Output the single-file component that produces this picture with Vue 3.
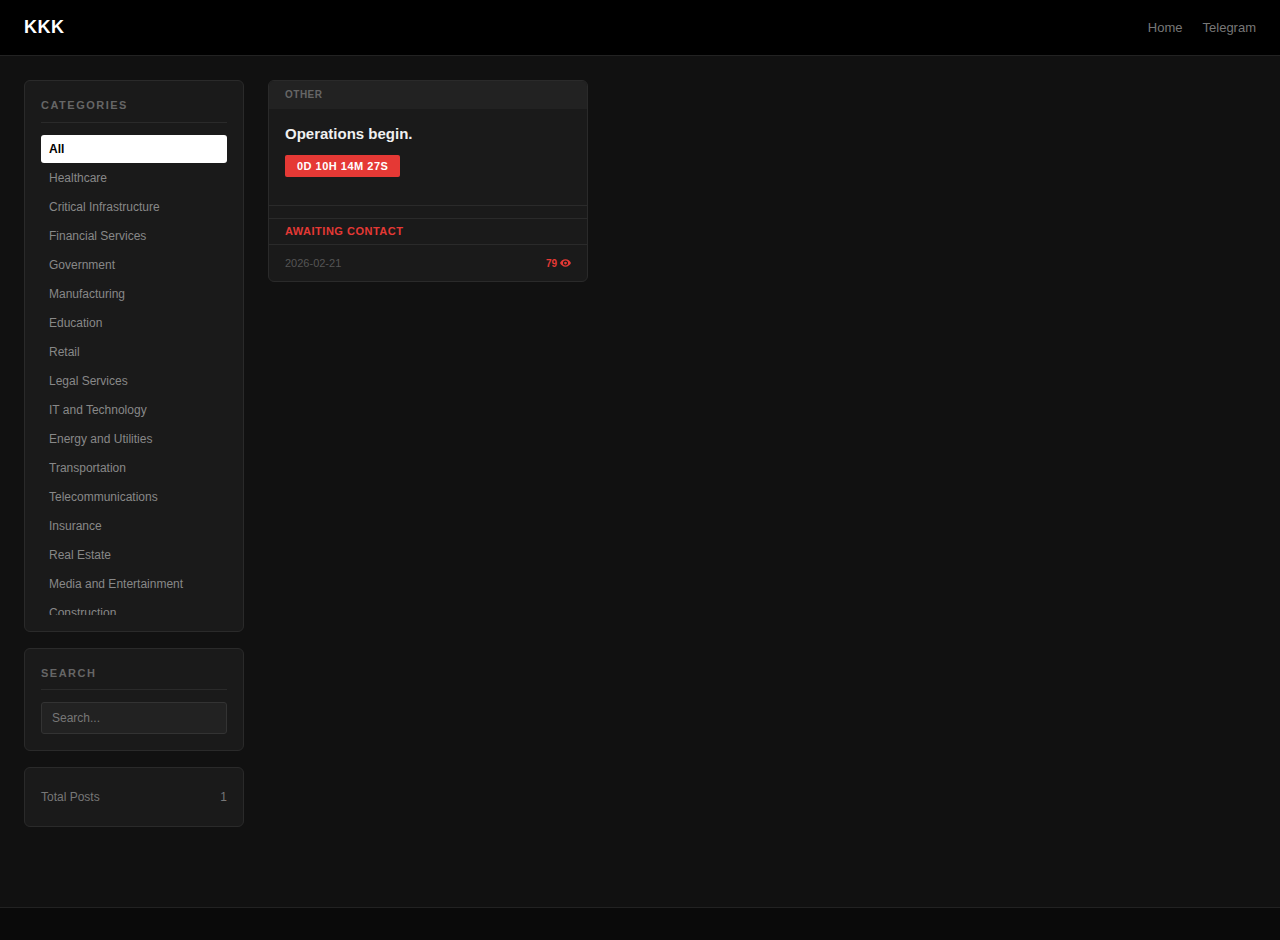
<template>
  <div class="page">
    <header class="site-header">
      <a class="logo">KKK</a>
      <nav class="nav">
        <a>Home</a>
        <a>Telegram</a>
      </nav>
    </header>

    <main class="layout">
      <aside class="sidebar">
        <section class="panel">
          <h3 class="panel-title">Categories</h3>
          <ul class="cat-list">
            <li v-for="(c, i) in categories" :key="c" class="cat" :class="{ active: i === 0 }">{{ c }}</li>
          </ul>
        </section>

        <section class="panel">
          <h3 class="panel-title search-title">Search</h3>
          <input class="search" type="text" placeholder="Search..." />
        </section>

        <section class="panel stats">
          <span>Total Posts</span>
          <span>1</span>
        </section>
      </aside>

      <div class="posts">
        <article class="card">
          <div class="card-cat">OTHER</div>
          <div class="card-body">
            <h2 class="card-title">Operations begin.</h2>
            <span class="timer">0D 10H 14M 27S</span>
          </div>
          <div class="card-spacer"></div>
          <div class="card-status">AWAITING CONTACT</div>
          <div class="card-foot">
            <span class="date">2026-02-21</span>
            <span class="views">
              79
              <svg class="eye" viewBox="0 0 24 16" width="11" height="8">
                <path d="M12 0C6.5 0 2.2 3.4 0 8c2.2 4.6 6.5 8 12 8s9.800-3.400 12-8c-2.200-4.600-6.500-8-12-8zm0 13.500a5.500 5.500 0 1 1 0-11 5.500 5.500 0 0 1 0 11zm0-8.500a3 3 0 1 0 0 6 3 3 0 0 0 0-6z" fill="currentColor" fill-rule="evenodd" />
              </svg>
            </span>
          </div>
        </article>
      </div>
    </main>

    <footer class="site-footer"></footer>
  </div>
</template>

<script setup>
const categories = [
  'All',
  'Healthcare',
  'Critical Infrastructure',
  'Financial Services',
  'Government',
  'Manufacturing',
  'Education',
  'Retail',
  'Legal Services',
  'IT and Technology',
  'Energy and Utilities',
  'Transportation',
  'Telecommunications',
  'Insurance',
  'Real Estate',
  'Media and Entertainment',
  'Construction',
  'Hospitality',
]
</script>

<style>
body {
  background: #111111;
}
</style>

<style scoped>
.page {
  height: 940px;
  display: flex;
  flex-direction: column;
  overflow: hidden;
  background: #111111;
  font-family: "Liberation Sans", Arial, sans-serif;
  color: #888888;
}

.site-header {
  height: 55px;
  flex: none;
  display: flex;
  align-items: center;
  justify-content: space-between;
  padding: 0 24px;
  background: #000000;
  border-bottom: 1px solid #222222;
  box-sizing: content-box;
}

.logo {
  font-size: 18px;
  font-weight: 700;
  letter-spacing: 0.5px;
  color: #ffffff;
}

.nav {
  display: flex;
  gap: 20px;
  font-size: 13px;
  color: #777777;
}

.layout {
  flex: 1;
  display: flex;
  align-items: flex-start;
  gap: 24px;
  padding: 24px;
}

.sidebar {
  width: 220px;
  flex: none;
  display: flex;
  flex-direction: column;
  gap: 16px;
}

.panel {
  background: #1a1a1a;
  border: 1px solid #2a2a2a;
  border-radius: 6px;
  padding: 16px;
}

.panel-title {
  margin: 0 0 12px;
  padding-bottom: 10px;
  height: 26px;
  box-sizing: border-box;
  border-bottom: 1px solid #2a2a2a;
  font-size: 11px;
  line-height: 16px;
  font-weight: 700;
  letter-spacing: 1.5px;
  text-transform: uppercase;
  color: #666666;
}

.search-title {
  height: 25px;
  padding-bottom: 9px;
}

.cat-list {
  list-style: none;
  margin: 0;
  padding: 0;
  height: 480px;
  overflow: hidden;
  display: flex;
  flex-direction: column;
  gap: 1px;
}

.cat {
  flex: none;
  height: 28px;
  line-height: 28px;
  padding: 0 8px;
  border-radius: 3px;
  font-size: 12px;
  color: #888888;
}

.cat.active {
  background: #ffffff;
  color: #000000;
  font-weight: 700;
}

.search {
  display: block;
  width: 100%;
  height: 32px;
  box-sizing: border-box;
  padding: 0 10px;
  background: #222222;
  border: 1px solid #333333;
  border-radius: 3px;
  outline: none;
  font-family: inherit;
  font-size: 12px;
  color: #888888;
}

.search::placeholder {
  color: #777777;
  opacity: 1;
}

.stats {
  display: flex;
  justify-content: space-between;
  align-items: center;
  height: 60px;
  box-sizing: border-box;
  font-size: 12px;
  color: #777777;
}

.posts {
  width: 320px;
  flex: none;
}

.card {
  background: #1a1a1a;
  border: 1px solid #2a2a2a;
  border-radius: 6px;
  overflow: hidden;
}

.card-cat {
  height: 28px;
  line-height: 27px;
  padding: 0 16px;
  background: #222222;
  font-size: 10px;
  font-weight: 700;
  letter-spacing: 0.5px;
  color: #666666;
}

.card-body {
  height: 97px;
  padding: 16px;
  box-sizing: border-box;
  border-bottom: 1px solid #2a2a2a;
}

.card-title {
  margin: 0 0 12px;
  font-size: 15px;
  line-height: 18px;
  font-weight: 700;
  color: #f0f0f0;
}

.timer {
  display: inline-block;
  height: 22px;
  line-height: 22px;
  padding: 0 12px;
  background: #e53935;
  border-radius: 2px;
  font-size: 11px;
  font-weight: 700;
  letter-spacing: 0.5px;
  color: #ffffff;
}

.card-spacer {
  height: 12px;
  border-bottom: 1px solid #2a2a2a;
}

.card-status {
  height: 26px;
  line-height: 24px;
  padding: 0 16px;
  box-sizing: border-box;
  border-bottom: 1px solid #2a2a2a;
  font-size: 11px;
  font-weight: 700;
  letter-spacing: 0.5px;
  color: #e53935;
}

.card-foot {
  height: 36px;
  display: flex;
  align-items: center;
  justify-content: space-between;
  padding: 0 16px;
  font-size: 11px;
}

.date {
  color: #555555;
}

.views {
  display: flex;
  align-items: center;
  gap: 3px;
  font-size: 10px;
  font-weight: 700;
  color: #e53935;
}

.eye {
  display: block;
}

.site-footer {
  height: 33px;
  flex: none;
  background: #0a0a0a;
  border-top: 1px solid #222222;
  box-sizing: border-box;
}
</style>
